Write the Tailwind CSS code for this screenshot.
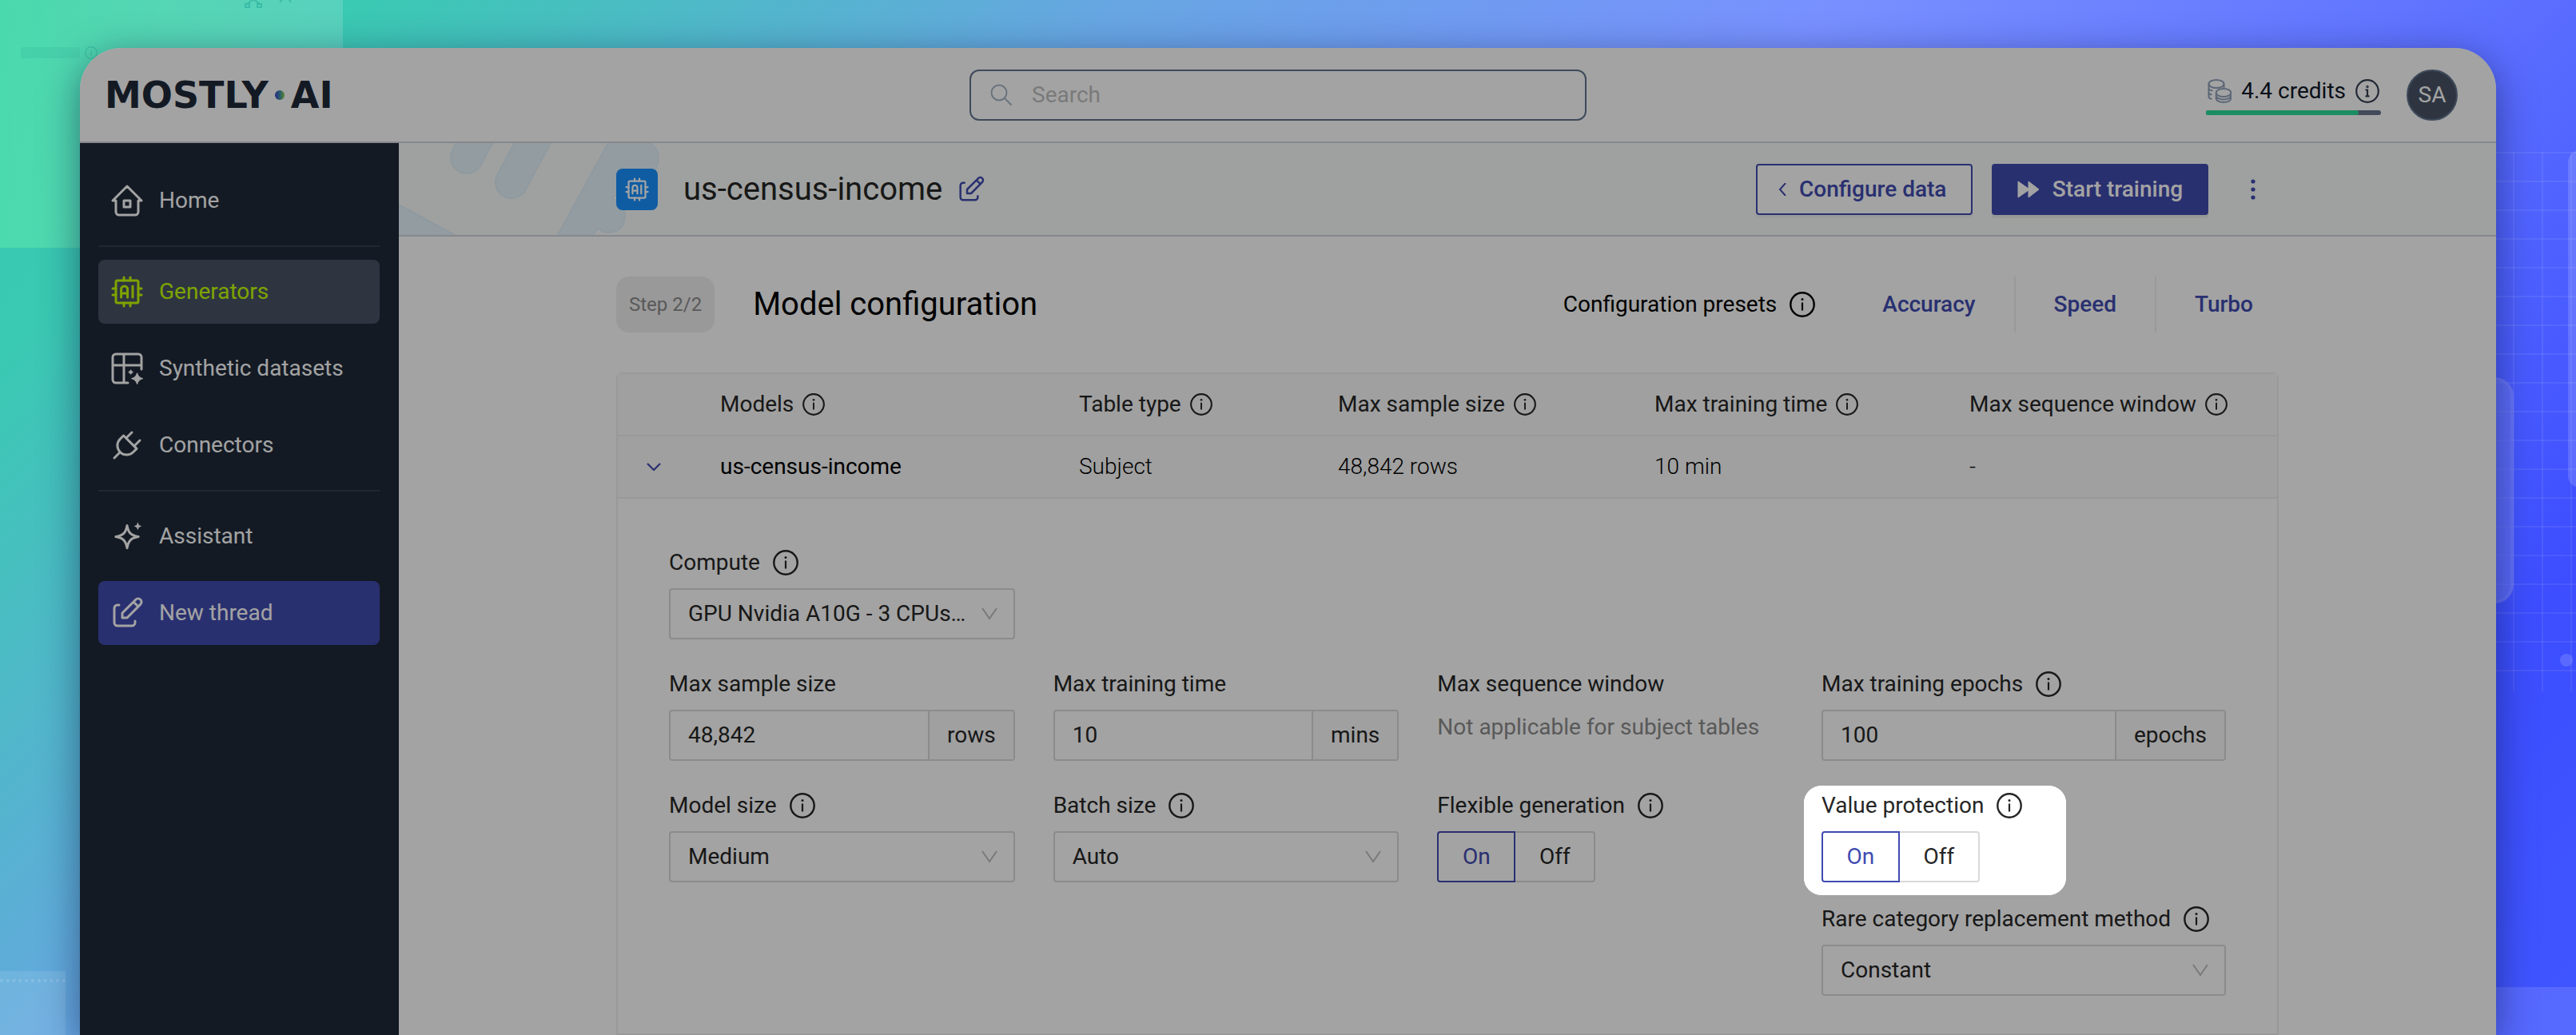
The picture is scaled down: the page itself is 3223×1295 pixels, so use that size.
<!DOCTYPE html>
<html lang="en">
<head>
<meta charset="utf-8">
<title>us-census-income - Model configuration</title>
<script src="https://cdn.jsdelivr.net/npm/@tailwindcss/browser@4"></script>
</head>
<body class="relative isolate min-h-screen overflow-x-hidden bg-[linear-gradient(135deg,#36c6ae_0%,#3ac9b2_10%,#67a6e2_31%,#7890ff_51%,#5a6dff_71%,#3c4eff_87%,#4056ff_100%)] px-[100px] pt-[60px] font-[Roboto,sans-serif] text-[28px] leading-8 text-[#262626]">

<svg class="hidden" aria-hidden="true">
  <symbol id="i-home" viewBox="0 0 24 24" fill="none" stroke="currentColor" stroke-width="1.5" stroke-linecap="round" stroke-linejoin="round"><path d="M5 12H3l9-9 9 9h-2M5 12v7a2 2 0 0 0 2 2h10a2 2 0 0 0 2-2v-7M10 12h4v4h-4z"/></symbol>
  <symbol id="i-chip" viewBox="0 0 24 24" fill="none" stroke="currentColor" stroke-width="1.5" stroke-linecap="round" stroke-linejoin="round"><rect x="5" y="5" width="14" height="14" rx="1"/><path d="M3 10h2M3 14h2M10 3v2M14 3v2M21 10h-2M21 14h-2M14 21v-2M10 21v-2M8.3 15.5v-5a2 2 0 0 1 4 0v5M8.3 13h4M15.5 8.5v7"/></symbol>
  <symbol id="i-table" viewBox="0 0 24 24" fill="none" stroke="currentColor" stroke-width="1.5" stroke-linecap="round" stroke-linejoin="round"><path d="M12.5 21H5a2 2 0 0 1-2-2V5a2 2 0 0 1 2-2h14a2 2 0 0 1 2 2v7.5M3 10h18M10 3v18"/><path fill="currentColor" stroke-width=".6" d="M18.3 15c.5 2.1 1.3 2.9 3.4 3.3-2.1.5-2.9 1.3-3.4 3.4-.5-2.1-1.3-2.9-3.4-3.4 2.1-.4 2.9-1.2 3.4-3.3zM14.3 13c.2.8.5 1.1 1.3 1.3-.8.2-1.1.5-1.3 1.3-.2-.8-.5-1.1-1.3-1.3.8-.2 1.1-.5 1.3-1.3z"/></symbol>
  <symbol id="i-plug" viewBox="0 0 24 24" fill="none" stroke="currentColor" stroke-width="1.5" stroke-linecap="round" stroke-linejoin="round"><path d="M9.785 6 18 14.215l-2.054 2.054a5.81 5.81 0 1 1-8.215-8.215zM4 20l3.5-3.5M15 4l-3.5 3.5M20 9l-3.5 3.5"/></symbol>
  <symbol id="i-sparkle" viewBox="0 0 24 24" fill="none" stroke="currentColor" stroke-width="1.5" stroke-linecap="round" stroke-linejoin="round"><path d="M12 5.2c.8 4.6 2.4 6.3 7.1 7.1-4.7.8-6.3 2.5-7.1 7.1-.8-4.6-2.4-6.3-7.1-7.1 4.7-.8 6.3-2.5 7.1-7.1z"/><path fill="currentColor" stroke-width=".5" d="M18.7 3.7c.3 1.3.7 1.7 2 2-1.3.3-1.7.7-2 2-.3-1.3-.7-1.7-2-2 1.3-.3 1.7-.7 2-2z"/></symbol>
  <symbol id="i-edit" viewBox="0 0 24 24" fill="none" stroke="currentColor" stroke-width="1.5" stroke-linecap="round" stroke-linejoin="round"><path d="M7 7H6a2 2 0 0 0-2 2v9a2 2 0 0 0 2 2h9a2 2 0 0 0 2-2v-1M20.385 6.585a2.1 2.1 0 0 0-2.97-2.97L9 12v3h3zM16 5l3 3"/></symbol>
  <symbol id="i-info" viewBox="0 0 32 32"><circle cx="16" cy="16" r="14.7" fill="none" stroke="currentColor" stroke-width="2.4"/><circle cx="16" cy="9.5" r="1.5" fill="currentColor"/><path d="M16 13.5v10" stroke="currentColor" stroke-width="2.2"/></symbol>
  <symbol id="i-down" viewBox="0 0 20 16"><path d="M1 1l9 13 9-13" fill="none" stroke="currentColor" stroke-width="2"/></symbol>
</svg>

<!-- Backdrop shapes -->
<div class="pointer-events-none absolute inset-0 -z-10 overflow-hidden" aria-hidden="true">
  <div class="absolute left-0 top-0 h-[310px] w-[429px] bg-linear-to-r from-[#52e2ac]/70 to-white/15"></div>
  <div class="absolute left-[26px] top-[59px] h-[14px] w-[74px] rounded bg-[#35b89a]/25"></div>
  <svg class="absolute left-[106px] top-[58px] size-4 text-[#2fb393]/60"><use href="#i-info"/></svg>
  <svg class="absolute left-[300px] top-0 text-[#2fb3a0]/70" width="70" height="16" fill="none" stroke="currentColor" stroke-width="2"><path d="M9 5l8-6 8 6M50 3l4-5M61-2l3 5"/><rect x="7" y="5" width="5" height="4"/><rect x="22" y="5" width="5" height="4"/></svg>
  <div class="absolute bottom-0 left-0 h-[80px] w-[82px] bg-white/10"></div>
  <div class="absolute bottom-[66px] left-0 w-[82px] border-t-4 border-dotted border-white/15"></div>
  <div class="absolute right-0 top-[190px] h-[675px] w-[115px] bg-[linear-gradient(to_right,rgba(255,255,255,.07)_2px,transparent_2px),linear-gradient(to_bottom,rgba(255,255,255,.07)_2px,transparent_2px)] bg-size-[36px_36px]"></div>
  <div class="absolute -right-5 top-[188px] h-[422px] w-[30px] rounded-2xl bg-white/15"></div>
  <div class="absolute right-[78px] top-[472px] h-[283px] w-[80px] rounded-3xl border-4 border-white/5 bg-[#6a78f5]/60"></div>
  <div class="absolute right-1 top-[818px] h-4 w-4 rounded-full bg-white/15"></div>
  <div class="absolute bottom-0 right-0 h-[60px] w-[120px] bg-white/12"></div>
</div>

<div class="flex min-h-[calc(100vh-60px)] flex-col overflow-hidden rounded-t-[52px] bg-white shadow-[0_12px_48px_rgba(10,20,60,.5)]">
  <header class="flex h-[119px] shrink-0 items-center border-b-2 border-gray-300 pl-[23px] pr-12">
    <div class="flex flex-1 items-center">
      <a href="#" class="flex items-center gap-2 pl-2 font-['DejaVu_Sans',sans-serif] text-[46px] font-bold leading-none text-gray-800">
        <span>MOSTLY</span>
        <span class="size-3 rounded-full bg-linear-to-r from-[#4433d0] via-[#3f8fa8] to-[#8fd02c]"></span>
        <span>AI</span>
      </a>
    </div>
    <label class="flex h-16 w-[772px] items-center gap-6 rounded-xl border-2 border-slate-500 px-6">
      <svg class="size-7 shrink-0 text-slate-400/80" viewBox="0 0 28 28" fill="none" stroke="currentColor" stroke-width="2"><circle cx="11" cy="11" r="9.5"/><path d="M18 18l8.5 8.5"/></svg>
      <input type="text" aria-label="Search" placeholder="Search" class="min-w-0 flex-1 outline-none placeholder:text-[#bfbfbf]">
    </label>
    <div class="flex flex-1 items-center justify-end gap-8">
      <div class="flex flex-col gap-2 pt-1">
        <div class="flex items-center gap-3 px-[2px] text-gray-900">
          <svg class="size-[30px] text-slate-400" viewBox="0 0 30 30" fill="none" stroke="currentColor" stroke-width="2"><ellipse cx="11" cy="6" rx="9.5" ry="5"/><path d="M1.5 6v16c0 1.5 1.5 2.5 4 3M1.5 11.5c0 1.5 2 2.5 5 3M1.5 17c0 1.2 1.5 2 4 2.5M20.5 6v5"/><ellipse cx="20" cy="17" rx="9.3" ry="5"/><path d="M10.7 17v7c0 3 4 5 9.3 5s9.3-2 9.3-5v-7M10.7 20.5c0 3 4 5 9.3 5s9.3-2 9.3-5"/></svg>
          <span>4.4 credits</span>
          <svg class="size-[30px] text-gray-700" viewBox="0 0 30 30" fill="none" stroke="currentColor" stroke-width="2.2"><circle cx="15" cy="15" r="13.8"/><path d="M12.500 13.500H15V21M12.500 21.300h5"/><circle cx="15" cy="9.500" r=".6"/></svg>
        </div>
        <div class="h-[6px] rounded-full bg-[#69758d]"><div class="h-full w-[87%] rounded-full bg-[#29de99]"></div></div>
      </div>
      <button class="size-16 rounded-full border-2 border-slate-500 bg-[#485367] text-white">SA</button>
    </div>
  </header>

  <div class="flex flex-1">
    <nav class="flex w-[399px] shrink-0 flex-col gap-4 bg-gray-800 pl-[23px] pr-6 pt-8 text-white">
      <a href="#" class="flex h-20 items-center gap-4 rounded-lg px-3"><svg class="size-12"><use href="#i-home"/></svg>Home</a>
      <hr class="border-t-2 border-[#353f52]">
      <a href="#" class="flex h-20 items-center gap-4 rounded-lg bg-[#485367] px-3 text-[#c6ff00]"><svg class="size-12"><use href="#i-chip"/></svg>Generators</a>
      <a href="#" class="flex h-20 items-center gap-4 rounded-lg px-3"><svg class="size-12"><use href="#i-table"/></svg>Synthetic datasets</a>
      <a href="#" class="flex h-20 items-center gap-4 rounded-lg px-3"><svg class="size-12"><use href="#i-plug"/></svg>Connectors</a>
      <hr class="border-t-2 border-[#353f52]">
      <a href="#" class="flex h-20 items-center gap-4 rounded-lg px-3"><svg class="size-12"><use href="#i-sparkle"/></svg>Assistant</a>
      <a href="#" class="flex h-20 items-center gap-4 rounded-lg bg-[#414bb0] px-3"><svg class="size-12"><use href="#i-edit"/></svg>New thread</a>
    </nav>

    <main class="min-w-0 flex-1">
      <div class="relative h-[117px] border-b-2 border-gray-300 bg-[#f9fcfa]">
        <svg class="absolute left-0 top-0" width="340" height="115" fill="#e7f4fa" stroke="#dff0fa" stroke-width="2" aria-hidden="true">
          <rect x="-20" y="-200" width="40" height="220" rx="20" transform="translate(85 18) rotate(28)"/>
          <rect x="-20" y="-200" width="40" height="220" rx="20" transform="translate(141 49) rotate(28)"/>
          <path d="M-2 76 75 118H-2z"/>
          <path d="M263-2H308c12 3 17 12 17 20 0 10-4 18-12 26l-46 24q1 4 8 4c10 8 14 38-11 40q-9 0-15-6l-7 11H198z"/>
        </svg>
        <div class="relative mx-auto flex h-full max-w-[2080px] items-center">
          <div class="flex size-[52px] items-center justify-center rounded-lg bg-[#1890ff] text-white"><svg class="size-9"><use href="#i-chip"/></svg></div>
          <h1 class="ml-8 text-[40px] leading-[48px]">us-census-income</h1>
          <button class="ml-4 text-[#414bb0]" aria-label="Rename"><svg class="size-10"><use href="#i-edit"/></svg></button>
          <div class="ml-auto flex items-center gap-6 font-medium">
            <button class="flex h-16 w-[271px] items-center gap-4 rounded border-2 border-[#414bb0] bg-white pl-[26px] text-[#414bb0] shadow-[0_4px_0_rgba(0,0,0,.03)]"><svg class="h-4 w-[10px]" viewBox="0 0 10 16" fill="none" stroke="currentColor" stroke-width="2"><path d="M9 0 2 8l7 8"/></svg>Configure data</button>
            <button class="flex h-16 w-[271px] items-center justify-center gap-4 rounded bg-[#414bb0] text-white shadow-[0_4px_0_rgba(0,0,0,.05)]"><svg class="h-[22px] w-7" viewBox="0 0 28 22" fill="currentColor" stroke="currentColor" stroke-linejoin="round"><path d="M1 1l13 9V1l13 10-13 10v-9L1 21z"/></svg>Start training</button>
            <button class="flex size-16 items-center justify-center text-[#414bb0]" aria-label="More"><svg width="6" height="26" fill="currentColor"><circle cx="3" cy="3" r="2.6"/><circle cx="3" cy="13" r="2.6"/><circle cx="3" cy="23" r="2.6"/></svg></button>
          </div>
        </div>
      </div>

      <div class="mx-auto max-w-[2080px] pt-12">
        <div class="flex h-[74px] items-center">
          <span class="flex h-[70px] items-center rounded-2xl bg-[#f0f0f0] px-4 text-2xl text-[#8c8c8c]">Step 2/2</span>
          <h2 class="ml-12 text-[40px] leading-[48px] text-black">Model configuration</h2>
          <div class="ml-auto flex items-center text-black">
            <span>Configuration presets</span>
            <svg class="ml-4 mr-9 size-8"><use href="#i-info"/></svg>
            <button class="h-[70px] px-12 font-medium text-[#414bb0]">Accuracy</button>
            <button class="h-[70px] border-x-2 border-[#f0f0f0] px-12 font-medium text-[#414bb0]">Speed</button>
            <button class="h-[70px] pl-12 pr-8 font-medium text-[#414bb0]">Turbo</button>
          </div>
        </div>

        <div class="mt-12 rounded-t-lg border-2 border-[#f0f0f0]">
          <table class="w-full table-fixed border-separate border-spacing-0 text-left">
            <colgroup><col class="w-24"><col class="w-[449px]"><col class="w-[324px]"><col class="w-[396px]"><col class="w-[394px]"><col></colgroup>
            <thead class="bg-[#fafafa]">
              <tr class="h-[78px]">
                <th class="border-b-2 border-[#f0f0f0]"></th>
                <th class="border-b-2 border-[#f0f0f0] px-8 font-normal"><div class="flex items-center gap-[11px]">Models <svg class="size-7"><use href="#i-info"/></svg></div></th>
                <th class="border-b-2 border-[#f0f0f0] px-8 font-normal"><div class="flex items-center gap-[11px]">Table type <svg class="size-7"><use href="#i-info"/></svg></div></th>
                <th class="border-b-2 border-[#f0f0f0] px-8 font-normal"><div class="flex items-center gap-[11px]">Max sample size <svg class="size-7"><use href="#i-info"/></svg></div></th>
                <th class="border-b-2 border-[#f0f0f0] px-8 font-normal"><div class="flex items-center gap-[11px]">Max training time <svg class="size-7"><use href="#i-info"/></svg></div></th>
                <th class="border-b-2 border-[#f0f0f0] px-8 font-normal"><div class="flex items-center gap-[11px] whitespace-nowrap">Max sequence window <svg class="size-7"><use href="#i-info"/></svg></div></th>
              </tr>
            </thead>
            <tbody class="bg-[#fafafa] text-black">
              <tr class="h-[78px]">
                <td class="border-b-2 border-[#f0f0f0] pl-9"><button class="flex text-[#414bb0]" aria-label="Collapse"><svg class="h-[10px] w-[18px]" viewBox="0 0 18 10" fill="none" stroke="currentColor" stroke-width="2.2"><path d="M1 1l8 8 8-8"/></svg></button></td>
                <td class="border-b-2 border-[#f0f0f0] px-8">us-census-income</td>
                <td class="border-b-2 border-[#f0f0f0] px-8 font-light">Subject</td>
                <td class="border-b-2 border-[#f0f0f0] px-8 font-light">48,842 rows</td>
                <td class="border-b-2 border-[#f0f0f0] px-8 font-light">10 min</td>
                <td class="border-b-2 border-[#f0f0f0] px-8 font-light">-</td>
              </tr>
            </tbody>
          </table>

          <form class="grid grid-cols-[repeat(3,minmax(0,1fr))_506px] items-start gap-x-12 gap-y-10 px-16 pb-[47px] pt-16">
            <div class="flex flex-col gap-4">
              <label for="compute" class="flex items-center gap-4">Compute <svg class="size-8"><use href="#i-info"/></svg></label>
              <div class="relative">
                <select id="compute" class="h-16 w-full appearance-none rounded border-2 border-[#d9d9d9] pl-[22px] pr-14"><option>GPU Nvidia A10G - 3 CPUs…</option></select>
                <svg class="pointer-events-none absolute right-[22px] top-6 h-4 w-5 text-[#bfbfbf]"><use href="#i-down"/></svg>
              </div>
            </div>

            <div class="col-start-1 flex flex-col gap-4">
              <label for="sample" class="flex items-center">Max sample size</label>
              <div class="flex h-16 rounded border-2 border-[#d9d9d9]">
                <input id="sample" type="text" value="48,842" class="min-w-0 flex-1 px-[22px] outline-none">
                <span class="flex items-center border-l-2 border-[#d9d9d9] bg-[#fafafa] px-[22px]">rows</span>
              </div>
            </div>
            <div class="flex flex-col gap-4">
              <label for="time" class="flex items-center">Max training time</label>
              <div class="flex h-16 rounded border-2 border-[#d9d9d9]">
                <input id="time" type="text" value="10" class="min-w-0 flex-1 px-[22px] outline-none">
                <span class="flex items-center border-l-2 border-[#d9d9d9] bg-[#fafafa] px-[22px]">mins</span>
              </div>
            </div>
            <div class="flex flex-col gap-4">
              <span>Max sequence window</span>
              <span class="leading-[44px] text-[#8c8c8c]">Not applicable for subject tables</span>
            </div>
            <div class="flex flex-col gap-4">
              <label for="epochs" class="flex items-center gap-4">Max training epochs <svg class="size-8"><use href="#i-info"/></svg></label>
              <div class="flex h-16 rounded border-2 border-[#d9d9d9]">
                <input id="epochs" type="text" value="100" class="min-w-0 flex-1 px-[22px] outline-none">
                <span class="flex items-center border-l-2 border-[#d9d9d9] bg-[#fafafa] px-[22px]">epochs</span>
              </div>
            </div>

            <div class="flex flex-col gap-4">
              <label for="model" class="flex items-center gap-4">Model size <svg class="size-8"><use href="#i-info"/></svg></label>
              <div class="relative">
                <select id="model" class="h-16 w-full appearance-none rounded border-2 border-[#d9d9d9] pl-[22px] pr-14"><option>Medium</option></select>
                <svg class="pointer-events-none absolute right-[22px] top-6 h-4 w-5 text-[#bfbfbf]"><use href="#i-down"/></svg>
              </div>
            </div>
            <div class="flex flex-col gap-4">
              <label for="batch" class="flex items-center gap-4">Batch size <svg class="size-8"><use href="#i-info"/></svg></label>
              <div class="relative">
                <select id="batch" class="h-16 w-full appearance-none rounded border-2 border-[#d9d9d9] pl-[22px] pr-14"><option>Auto</option></select>
                <svg class="pointer-events-none absolute right-[22px] top-6 h-4 w-5 text-[#bfbfbf]"><use href="#i-down"/></svg>
              </div>
            </div>
            <fieldset>
              <legend class="mb-4 flex items-center gap-4">Flexible generation <svg class="size-8"><use href="#i-info"/></svg></legend>
              <div class="flex h-16">
                <label class="relative flex w-[98px] items-center justify-center rounded-l border-2 border-[#414bb0] text-[#414bb0]"><input type="radio" name="flex" class="sr-only" checked>On</label>
                <label class="relative flex w-[100px] items-center justify-center rounded-r border-2 border-l-0 border-[#d9d9d9]"><input type="radio" name="flex" class="sr-only">Off</label>
              </div>
            </fieldset>
            <div class="flex flex-col gap-[30px]">
              <!-- Spotlight: its spread shadow dims the rest of the window -->
              <fieldset class="relative z-10 -mb-4 -ml-[22px] -mt-[9px] w-[328px] rounded-[22px] bg-white pb-4 pl-[22px] pt-[9px] shadow-[0_0_0_4000px_rgba(0,0,0,.36)]">
                <legend class="float-left mb-4 flex w-full items-center gap-4">Value protection <svg class="size-8"><use href="#i-info"/></svg></legend>
                <div class="clear-both flex h-16">
                  <label class="relative flex w-[98px] items-center justify-center rounded-l border-2 border-[#414bb0] text-[#414bb0]"><input type="radio" name="protect" class="sr-only" checked>On</label>
                  <label class="relative flex w-[100px] items-center justify-center rounded-r border-2 border-l-0 border-[#d9d9d9]"><input type="radio" name="protect" class="sr-only">Off</label>
                </div>
              </fieldset>
              <div class="flex flex-col gap-4">
                <label for="rare" class="flex items-center gap-4">Rare category replacement method <svg class="size-8"><use href="#i-info"/></svg></label>
                <div class="relative">
                  <select id="rare" class="h-16 w-full appearance-none rounded border-2 border-[#d9d9d9] pl-[22px] pr-14"><option>Constant</option></select>
                  <svg class="pointer-events-none absolute right-[22px] top-6 h-4 w-5 text-[#bfbfbf]"><use href="#i-down"/></svg>
                </div>
              </div>
            </div>
          </form>
        </div>
      </div>
    </main>
  </div>
</div>
</body>
</html>
